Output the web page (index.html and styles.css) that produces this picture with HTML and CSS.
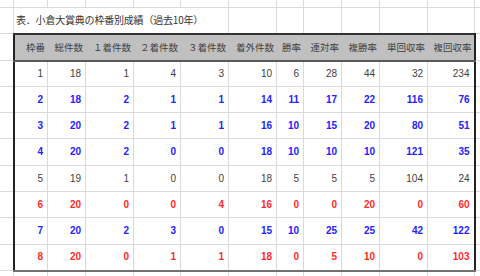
FILE: index.html
```html
<!DOCTYPE html>
<html lang="ja">
<head>
<meta charset="utf-8">
<title>小倉大賞典 枠番別成績</title>
<link rel="stylesheet" href="styles.css">
</head>
<body>
<table class="sheet">
<colgroup>
<col class="w14"><col class="w34"><col class="w38"><col class="w48"><col class="w47"><col class="w48"><col class="w48"><col class="w27"><col class="w38"><col class="w38"><col class="w48"><col class="w47"><col class="w6">
</colgroup>
<tr class="r-top"><td></td><td></td><td></td><td></td><td></td><td></td><td></td><td></td><td></td><td></td><td></td><td></td><td></td></tr>
<tr class="r-cap"><td></td><td class="cap" colspan="5">表．小倉大賞典の枠番別成績（過去10年）</td><td></td><td></td><td></td><td></td><td></td><td></td><td></td></tr>
<tr class="r-head"><td></td><th class="first">枠番</th><th>総件数</th><th>１着件数</th><th>２着件数</th><th>３着件数</th><th>着外件数</th><th>勝率</th><th>連対率</th><th>複勝率</th><th>単回収率</th><th class="last">複回収率</th><td></td></tr>
<tr class="r26 gray"><td class="out"></td><td class="first">1</td><td>18</td><td>1</td><td>4</td><td>3</td><td>10</td><td>6</td><td>28</td><td>44</td><td>32</td><td class="last">234</td><td class="out"></td></tr>
<tr class="r26 blue"><td class="out"></td><td class="first">2</td><td>18</td><td>2</td><td>1</td><td>1</td><td>14</td><td>11</td><td>17</td><td>22</td><td>116</td><td class="last">76</td><td class="out"></td></tr>
<tr class="r26 blue"><td class="out"></td><td class="first">3</td><td>20</td><td>2</td><td>1</td><td>1</td><td>16</td><td>10</td><td>15</td><td>20</td><td>80</td><td class="last">51</td><td class="out"></td></tr>
<tr class="r27 blue"><td class="out"></td><td class="first">4</td><td>20</td><td>2</td><td>0</td><td>0</td><td>18</td><td>10</td><td>10</td><td>10</td><td>121</td><td class="last">35</td><td class="out"></td></tr>
<tr class="r26 gray"><td class="out"></td><td class="first">5</td><td>19</td><td>1</td><td>0</td><td>0</td><td>18</td><td>5</td><td>5</td><td>5</td><td>104</td><td class="last">24</td><td class="out"></td></tr>
<tr class="r26 red"><td class="out"></td><td class="first">6</td><td>20</td><td>0</td><td>0</td><td>4</td><td>16</td><td>0</td><td>0</td><td>20</td><td>0</td><td class="last">60</td><td class="out"></td></tr>
<tr class="r27 blue"><td class="out"></td><td class="first">7</td><td>20</td><td>2</td><td>3</td><td>0</td><td>15</td><td>10</td><td>25</td><td>25</td><td>42</td><td class="last">122</td><td class="out"></td></tr>
<tr class="r26 red end"><td class="out"></td><td class="first">8</td><td>20</td><td>0</td><td>1</td><td>1</td><td>18</td><td>0</td><td>5</td><td>10</td><td>0</td><td class="last">103</td><td class="out"></td></tr>
<tr class="r-bot"><td></td><td></td><td></td><td></td><td></td><td></td><td></td><td></td><td></td><td></td><td></td><td></td><td></td></tr>
</table>
</body>
</html>
```
FILE: styles.css
```css
html, body {
  margin: 0;
  padding: 0;
  background: #ffffff;
  overflow: hidden;
}
body {
  width: 480px;
  height: 276px;
}
.sheet {
  border-collapse: collapse;
  table-layout: fixed;
  width: 481px;
  margin: -1px 0 0 -1px;
  font-family: "Liberation Sans", Arial, sans-serif;
  font-size: 10px;
  color: #404040;
}
.w6 { width: 6px; }
.w14 { width: 14px; }
.w27 { width: 27px; }
.w34 { width: 34px; }
.w38 { width: 38px; }
.w47 { width: 47px; }
.w48 { width: 48px; }
.sheet td, .sheet th {
  border: 1px solid #dadada;
  padding: 0 4px 0 0;
  text-align: right;
  vertical-align: middle;
  white-space: nowrap;
  overflow: hidden;
  line-height: 12px;
}
.r-top { height: 8px; }
.r-cap { height: 26px; }
.r-head { height: 27px; }
.r26 { height: 26px; }
.r27 { height: 27px; }
.r-bot { height: 10px; }
.sheet td.cap {
  text-align: left;
  padding: 0 0 0 2px;
  overflow: visible;
  font-family: "Noto Sans CJK JP", "Noto Sans", sans-serif;
  font-size: 10px;
  letter-spacing: -0.2px;
  color: #333333;
}
.r-head th {
  background: #c0c0c0;
  font-family: "Noto Sans CJK JP", "Noto Sans", sans-serif;
  font-weight: normal;
  font-size: 9.5px;
  color: #404040;
  padding-right: 2px;
  border-top: 2px solid #333333;
  border-bottom: 2px solid #5a5a5a;
  border-left: 1px solid #c0c0c0;
  border-right: 1px solid #c0c0c0;
}
.sheet .first { border-left: 2px solid #222222; }
.sheet .last { border-right: 2px solid #222222; }
.end td { border-bottom: 2px solid #707070; }
.end td.out { border-bottom: 1px solid #dadada; }
.gray td { color: #404040; }
.blue td { color: #2222ff; font-weight: bold; }
.red td { color: #ff2a2a; font-weight: bold; }
```
